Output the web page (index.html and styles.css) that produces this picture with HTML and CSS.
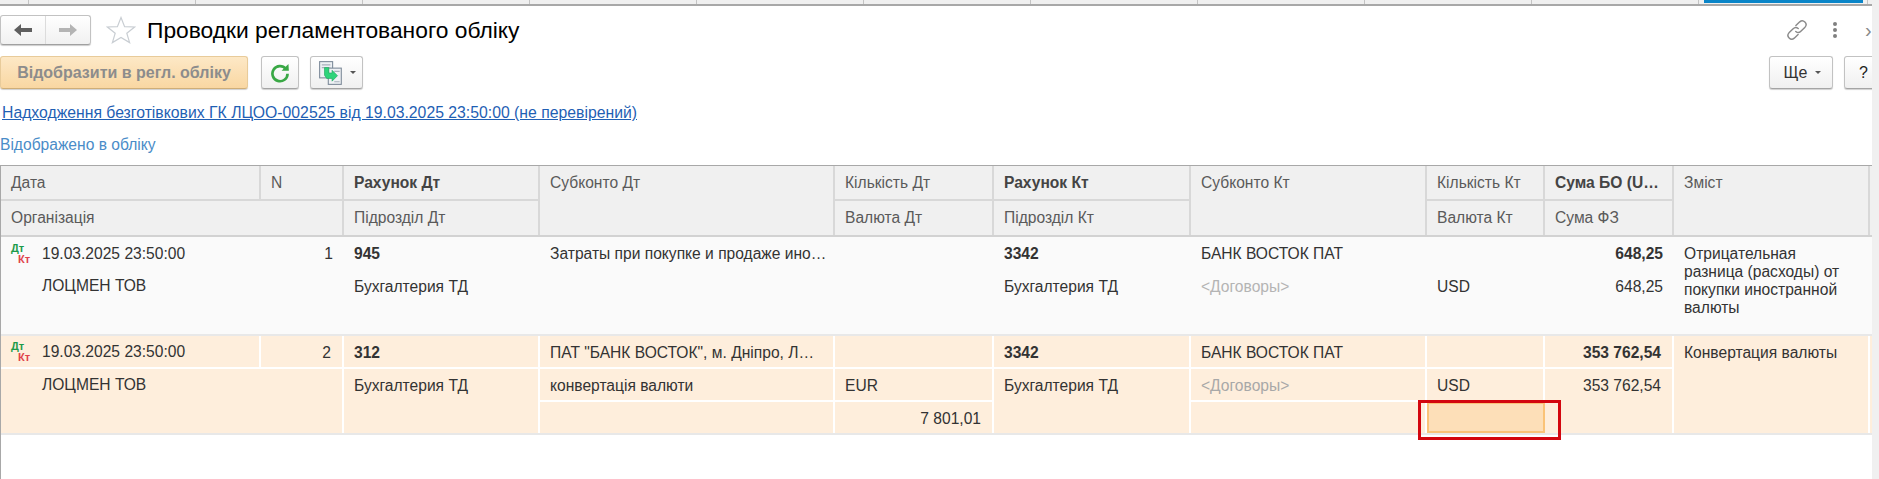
FILE: index.html
```html
<!DOCTYPE html>
<html lang="uk">
<head>
<meta charset="utf-8">
<title>Проводки регламентованого обліку</title>
<link rel="stylesheet" href="styles.css">
</head>
<body>
<div class="page">
  <main class="main">
    <div class="tabs">
      <div class="tab tab-first"></div>
      <div class="tab"></div><div class="tab"></div><div class="tab"></div><div class="tab"></div><div class="tab"></div>
      <div class="tab"></div><div class="tab"></div><div class="tab"></div><div class="tab"></div><div class="tab"></div>
      <div class="tab tab-active"><span class="tab-bar"></span></div>
    </div>

    <div class="titlebar">
      <div class="nav">
        <button class="nav-btn">
          <svg width="18" height="14" viewBox="0 0 18 14"><path d="M0 7 L7 1 V5 H18 V9 H7 V13 Z" fill="#5f5f5f"/></svg>
        </button>
        <button class="nav-btn nav-next">
          <svg width="18" height="14" viewBox="0 0 18 14"><path d="M18 7 L11 1 V5 H0 V9 H11 V13 Z" fill="#b4b4b4"/></svg>
        </button>
      </div>
      <svg class="star" width="30" height="28" viewBox="0 0 30 28"><path d="M15 1.5 L18.6 10.6 L28.6 11 L20.8 17.2 L23.6 26.6 L15 21.4 L6.4 26.6 L9.2 17.2 L1.4 11 L11.4 10.6 Z" fill="#fff" stroke="#c9ced3" stroke-width="1.2"/></svg>
      <h1 class="title">Проводки регламентованого обліку</h1>
      <div class="title-tools">
        <svg class="link-icon" width="22" height="22" viewBox="0 0 20 20" fill="none" stroke="#8a8a8a" stroke-width="1.3" stroke-linecap="round"><path d="M9 6 L12.5 2.6 a3.4 3.4 0 0 1 4.8 4.8 L13.5 11.2 a3.4 3.4 0 0 1 -4.6 .2"/><path d="M11 14 L7.5 17.4 a3.4 3.4 0 0 1 -4.8 -4.8 L6.5 8.8 a3.4 3.4 0 0 1 4.6 -.2"/></svg>
        <span class="dots"><i></i><i></i><i></i></span>
        <span class="chev">›</span>
      </div>
    </div>

    <div class="toolbar">
      <button class="btn btn-primary">Відобразити в регл. обліку</button>
      <button class="btn btn-icon">
        <svg width="20" height="20" viewBox="0 0 18 18" fill="none"><path d="M14.2 5.2 A6.8 6.8 0 1 0 15.8 9.6" stroke="#39a845" stroke-width="2.4"/><path d="M10.4 7 L17 7 L16.6 .8 Z" fill="#39a845"/></svg>
      </button>
      <button class="btn btn-copy">
        <svg width="26" height="26" viewBox="0 0 24 24"><rect x="1.5" y="1.500" width="12" height="15" fill="#eef1f4" stroke="#7d8a99"/><rect x="9.5" y="7.5" width="12" height="15" fill="#eef1f4" stroke="#7d8a99"/><path d="M3.500 4.500h8M3.500 7h8M15 20h5M15 10.500h5" stroke="#a7b0ba"/><path d="M6 7 L10 7 L10 12 L13 12 L13 9.500 L18 14.500 L13 19.500 L13 17 L8 17 L6 14 Z" fill="#2ed47a" stroke="#22a860" stroke-width=".6"/></svg>
        <span class="caret"></span>
      </button>
      <div class="toolbar-right">
        <button class="btn btn-more">Ще <span class="caret"></span></button>
        <button class="btn btn-help">?</button>
      </div>
    </div>

    <p class="doc-line"><a class="doc-link" href="#">Надходження безготівкових ГК ЛЦОО-002525 від 19.03.2025 23:50:00 (не перевірений)</a></p>
    <p class="status">Відображено в обліку</p>

    <section class="table">
      <div class="grid head">
        <div class="c hc c1 r1">Дата</div>
        <div class="c hc c2 r1">N</div>
        <div class="c hc c3 r1 b bl">Рахунок Дт</div>
        <div class="c hc c4 s2">Субконто Дт</div>
        <div class="c hc c5 r1">Кількість Дт</div>
        <div class="c hc c6 r1 b bl">Рахунок Кт</div>
        <div class="c hc c7 s2">Субконто Кт</div>
        <div class="c hc c8 r1">Кількість Кт</div>
        <div class="c hc c9 r1 b bl">Сума БО (U…</div>
        <div class="c hc c10 s2">Зміст</div>
        <div class="c hc c12 r2">Організація</div>
        <div class="c hc c3 r2">Підрозділ Дт</div>
        <div class="c hc c5 r2">Валюта Дт</div>
        <div class="c hc c6 r2">Підрозділ Кт</div>
        <div class="c hc c8 r2">Валюта Кт</div>
        <div class="c hc c9 r2">Сума ФЗ</div>
      </div>

      <div class="grid row row-plain">
        <div class="c c1 r1 date"><span class="dk"><span class="dk-d">Дт</span><span class="dk-k">Кт</span></span>19.03.2025 23:50:00</div>
        <div class="c c2 r1 num">1</div>
        <div class="c c12 r23 org">ЛОЦМЕН ТОВ</div>
        <div class="c c3 r1 b">945</div>
        <div class="c c3 r23">Бухгалтерия ТД</div>
        <div class="c c4 r1">Затраты при покупке и продаже ино…</div>
        <div class="c c4 r2"></div>
        <div class="c c4 r3"></div>
        <div class="c c5 r1"></div>
        <div class="c c5 r2"></div>
        <div class="c c5 r3"></div>
        <div class="c c6 r1 b">3342</div>
        <div class="c c6 r23">Бухгалтерия ТД</div>
        <div class="c c7 r1">БАНК ВОСТОК ПАТ</div>
        <div class="c c7 r2 muted">&lt;Договоры&gt;</div>
        <div class="c c7 r3"></div>
        <div class="c c8 r1"></div>
        <div class="c c8 r2">USD</div>
        <div class="c c8 r3"></div>
        <div class="c c9 r1 b num">648,25</div>
        <div class="c c9 r23 num">648,25</div>
        <div class="c c10 rall wrap">Отрицательная разница (расходы) от покупки иностранной валюты</div>
      </div>

      <div class="grid row row-current">
        <div class="c c1 r1 date"><span class="dk"><span class="dk-d">Дт</span><span class="dk-k">Кт</span></span>19.03.2025 23:50:00</div>
        <div class="c c2 r1 num">2</div>
        <div class="c c12 r23 org">ЛОЦМЕН ТОВ</div>
        <div class="c c3 r1 b">312</div>
        <div class="c c3 r23">Бухгалтерия ТД</div>
        <div class="c c4 r1">ПАТ "БАНК ВОСТОК", м. Дніпро, Л…</div>
        <div class="c c4 r2">конвертація валюти</div>
        <div class="c c4 r3"></div>
        <div class="c c5 r1"></div>
        <div class="c c5 r2">EUR</div>
        <div class="c c5 r3 num">7 801,01</div>
        <div class="c c6 r1 b">3342</div>
        <div class="c c6 r23">Бухгалтерия ТД</div>
        <div class="c c7 r1">БАНК ВОСТОК ПАТ</div>
        <div class="c c7 r2 muted">&lt;Договоры&gt;</div>
        <div class="c c7 r3"></div>
        <div class="c c8 r1"></div>
        <div class="c c8 r2">USD</div>
        <div class="c c8 r3 selected"><span class="mark"></span></div>
        <div class="c c9 r1 b num">353 762,54</div>
        <div class="c c9 r23 num">353 762,54</div>
        <div class="c c10 rall wrap">Конвертация валюты</div>
      </div>
    </section>
  </main>
  <aside class="band"></aside>
</div>
</body>
</html>
```

FILE: styles.css
```css
* { box-sizing: border-box; }
html, body { margin: 0; padding: 0; height: 100%; background: #fff; overflow: hidden; }
body { font-family: "Liberation Sans", Arial, sans-serif; font-size: 15.6px; color: #333; }
.page { display: flex; height: 479px; width: 1879px; }
.main { width: 1872px; flex: none; overflow: hidden; }
.band { flex: 1; background: #f0f0f0; }

.tabs { display: flex; height: 6px; background: #f0f0f0; border-bottom: 2px solid #a8a8a8; }
.tab { width: 167px; flex: none; border-right: 1px solid #c4c4c4; }
.tab-first { width: 29px; }
.tab-active { width: 169px; padding-left: 5px; padding-right: 4px; }
.tab-bar { display: block; height: 3px; background: #0a85c8; }

.titlebar { display: flex; align-items: center; height: 30px; margin-top: 9px; }
.nav { display: flex; width: 91px; height: 30px; border: 1px solid #c2c2c2; border-bottom-color: #a0a0a0; border-radius: 3px; background: linear-gradient(#fff, #f1f1f1); box-shadow: 0 1px 1px #ccc; }
.nav-btn { flex: 1; border: 0; background: none; padding: 0; display: flex; align-items: center; justify-content: center; }
.nav-next { border-left: 1px solid #dcdcdc; }
.star { margin-left: 15px; flex: none; }
.title { margin: 0 0 0 11px; font-size: 22.8px; font-weight: 400; color: #000; line-height: 30px; white-space: nowrap; }
.title-tools { margin-left: auto; display: flex; align-items: center; }
.link-icon { margin-right: 25px; }
.dots { display: flex; flex-direction: column; gap: 2px; margin-right: 28px; }
.dots i { width: 4px; height: 4px; border-radius: 50%; background: #808080; }
.chev { color: #888; font-size: 20px; width: 7px; overflow: hidden; }

.toolbar { display: flex; margin-top: 11px; height: 33px; }
.btn { height: 33px; border: 1px solid #c2c2c2; border-bottom-color: #a4a4a4; border-radius: 3px; background: linear-gradient(#fff, #f0f0f0); box-shadow: 0 1px 1px #d0d0d0; padding: 0; display: flex; align-items: center; justify-content: center; font-family: inherit; color: #333; font-size: 16px; }
.btn-primary { width: 248px; background: linear-gradient(#fde8c6, #f9d7a2); border-color: #e8cb9a; border-bottom-color: #cfae78; color: #8c8c8c; font-weight: 700; }
.btn-icon { width: 38px; margin-left: 13px; }
.btn-copy { width: 53px; margin-left: 11px; justify-content: flex-start; padding-left: 7px; }
.btn-copy .caret { margin-left: 6px; }
.caret { display: inline-block; width: 0; height: 0; border-left: 3px solid transparent; border-right: 3px solid transparent; border-top: 3px solid #555; }
.toolbar-right { margin-left: auto; display: flex; }
.btn-more { width: 64px; gap: 8px; padding-left: 3px; }
.btn-help { width: 40px; margin-left: 11px; margin-right: -12px; justify-content: flex-start; padding-left: 14px; color: #222; }

.doc-line { margin: 15px 0 0 2px; height: 18px; line-height: 18px; }
.doc-link { color: #1f5fb4; text-decoration: underline; font-size: 15.78px; }
.status { margin: 14px 0 0; height: 18px; line-height: 18px; color: #4a8cc8; }

.table { margin-top: 11px; border-top: 1px solid #a8a8a8; border-left: 1px solid #a8a8a8; height: 314px; }
.grid { display: grid; grid-template-columns: 260px 83px 196px 295px 159px 197px 236px 118px 129px 196px 2px; }
.head { grid-template-rows: 35px 34px; background: #f0f0f0; border-bottom: 2px solid #d2d2d2; height: 71px; }
.row { grid-template-rows: 33px 33px 31px; }
.row-plain { background: #fafafa; border-bottom: 2px solid #e8e8e8; height: 99px; }
.row-current { background: #feeedc; border-bottom: 2px solid #e8e8e8; height: 99px; }

.c { padding: 0 10px; line-height: 34px; white-space: nowrap; overflow: hidden; min-width: 0; }
.c1 { grid-column: 1; } .c2 { grid-column: 2; } .c12 { grid-column: 1 / 3; }
.c3 { grid-column: 3; } .c4 { grid-column: 4; } .c5 { grid-column: 5; }
.c6 { grid-column: 6; } .c7 { grid-column: 7; } .c8 { grid-column: 8; }
.c9 { grid-column: 9; } .c10 { grid-column: 10; }
.r1 { grid-row: 1; } .r2 { grid-row: 2; } .r3 { grid-row: 3; }
.r23 { grid-row: 2 / 4; } .rall { grid-row: 1 / 4; }
.s2 { grid-row: 1 / 3; }

.hc { color: #5a5a5a; border-right: 2px solid #d8d8d8; line-height: 34px; }
.hc.r1 { border-bottom: 2px solid #d8d8d8; }
.hc.bl { color: #444; }
.b { font-weight: 700; }
.num { text-align: right; padding-right: 11px; }
.muted { color: #b4b4b4; }
.date { display: flex; align-items: center; padding-left: 10px; }
.date.r1 { padding-top: 0; }
.org { padding-left: 41px; line-height: 32px; }
.dk { display: flex; flex-direction: column; width: 31px; height: 22px; flex: none; font-size: 11px; line-height: 11px; font-weight: 700; }
.dk-d { color: #1d9a4a; }
.dk-k { color: #e0434a; padding-left: 7px; }
.wrap { white-space: normal; line-height: 18px; padding-top: 8px; padding-right: 25px; }

.row-current .c { border-right: 2px solid #fff; }
.row-current .r1, .row-current .r2 { border-bottom: 2px solid #fff; }
.row-current .muted { color: #a8a8a8; }
.selected { position: relative; overflow: visible; background: #fddfb8; border: 2px solid #fac378 !important; }
.mark { position: absolute; left: -11px; top: -4px; width: 143px; height: 40px; border: 3px solid #d3060f; }
```
